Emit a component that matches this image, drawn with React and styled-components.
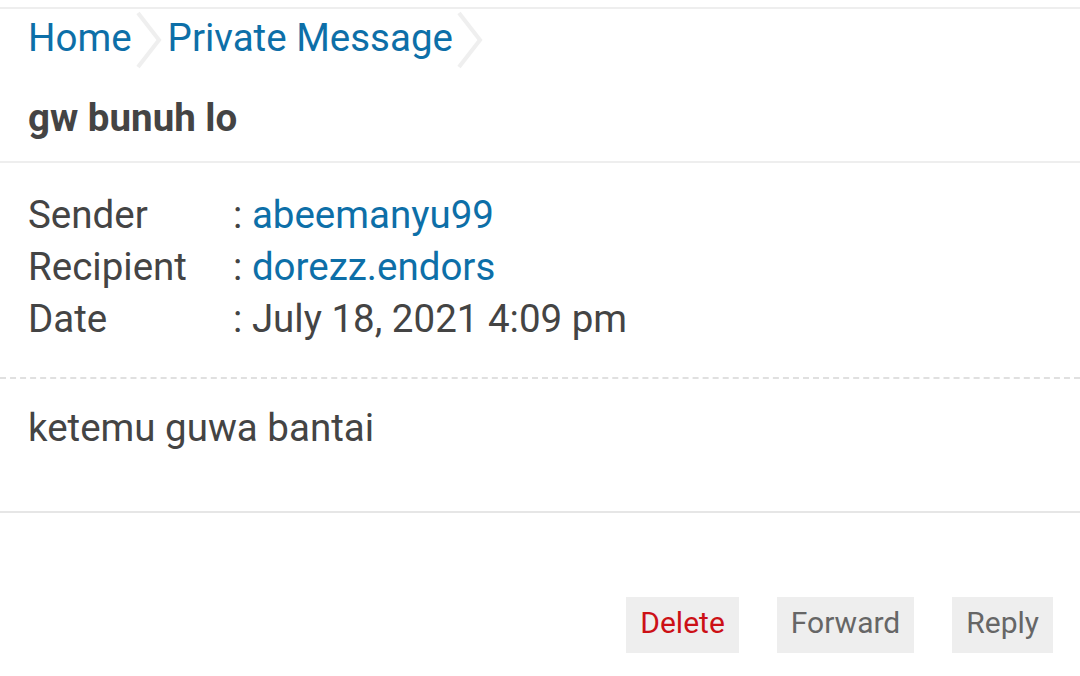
import React from 'react';
import styled, { createGlobalStyle } from 'styled-components';

const GlobalStyle = createGlobalStyle`
  html, body {
    margin: 0;
    padding: 0;
    background: #fff;
  }
  body {
    font-family: Roboto, "Noto Sans", "Liberation Sans", sans-serif;
    color: #444;
  }
`;

const Page = styled.div`
  padding-top: 7px;
`;

const Panel = styled.div`
  border-top: 2px solid #eeeeee;
`;

const Breadcrumb = styled.nav`
  display: flex;
  align-items: center;
  padding: 0 28px;
  height: 58px;
`;

const Crumb = styled.a`
  font-size: 38.5px;
  line-height: 58px;
  color: #0d6fa8;
  text-decoration: none;
`;

const Chevron = styled.svg`
  width: 30px;
  height: 58px;
  margin: 4px 3px 0 3px;
  flex: none;
`;

const Title = styled.h1`
  margin: 27px 0 0;
  padding: 0 28px 19px;
  font-size: 38.5px;
  line-height: 48px;
  font-weight: 700;
  color: #444;
  border-bottom: 2px solid #eeeeee;
`;

const Meta = styled.div`
  padding: 26px 28px 32px;
  border-bottom: 2px dashed #e0e0e0;
`;

const MetaRow = styled.div`
  display: grid;
  grid-template-columns: 205px 1fr;
  font-size: 38.5px;
  line-height: 52px;
`;

const Label = styled.span`
  color: #444;
`;

const Value = styled.span`
  color: ${({ link }) => (link ? '#0d6fa8' : '#444')};
  &::before {
    content: ': ';
    color: #444;
  }
`;

const Body = styled.div`
  padding: 23px 28px 57px;
  font-size: 38.5px;
  line-height: 52px;
  border-bottom: 2px solid #e6e6e6;
`;

const Actions = styled.div`
  display: flex;
  justify-content: flex-end;
  gap: 38px;
  padding: 84px 27px 0;
`;

const Button = styled.button`
  appearance: none;
  border: 0;
  outline: none;
  height: 56px;
  padding: 0 14px 6px;
  font-family: inherit;
  font-size: 30px;
  background: #eeeeee;
  color: ${({ danger }) => (danger ? '#cc1016' : '#666')};
  cursor: pointer;
`;

const Separator = () => (
  <Chevron viewBox="0 0 30 58">
    <polyline points="3,2 24,29 3,56" fill="none" stroke="#efefef" strokeWidth="4" />
  </Chevron>
);

const meta = [
  { label: 'Sender', value: 'abeemanyu99', link: true },
  { label: 'Recipient', value: 'dorezz.endors', link: true },
  { label: 'Date', value: 'July 18, 2021 4:09 pm' }
];

const App = () => (
  <Page>
    <GlobalStyle />
    <Panel>
      <Breadcrumb>
        <Crumb href="#">Home</Crumb>
        <Separator />
        <Crumb href="#">Private Message</Crumb>
        <Separator />
      </Breadcrumb>
      <Title>gw bunuh lo</Title>
      <Meta>
        {meta.map(row => (
          <MetaRow key={row.label}>
            <Label>{row.label}</Label>
            <Value link={row.link}>{row.value}</Value>
          </MetaRow>
        ))}
      </Meta>
      <Body>ketemu guwa bantai</Body>
      <Actions>
        <Button danger type="button">Delete</Button>
        <Button type="button">Forward</Button>
        <Button type="button">Reply</Button>
      </Actions>
    </Panel>
  </Page>
);

export default App;
